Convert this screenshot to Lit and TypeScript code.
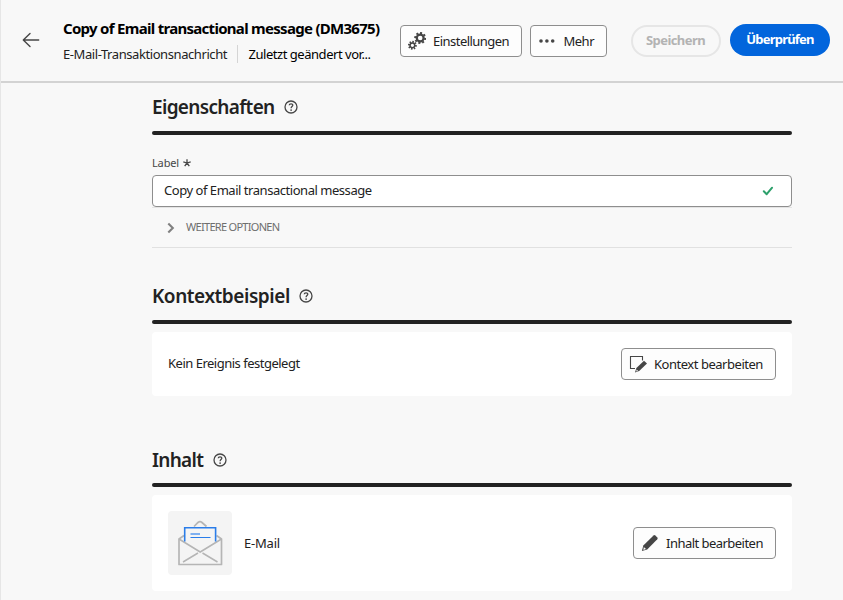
import { LitElement, html, css, svg } from "lit";
import { customElement, property } from "lit/decorators.js";

const gear = (cx: number, cy: number, r: number, hole: number, tooth: number) => svg`
  <circle cx=${cx} cy=${cy} r=${(r + hole) / 2} fill="none" stroke="#464646" stroke-width=${r - hole}></circle>
  ${[0, 45, 90, 135, 180, 225, 270, 315].map(
    (a) => svg`<rect x=${cx - tooth / 2} y=${cy - r - 1.5} width=${tooth} height="2" fill="#464646"
      transform=${`rotate(${a + 10} ${cx} ${cy})`}></rect>`
  )}`;

const icons = {
  back: svg`<path d="M8 2.600 1.300 9l6.700 6.400M1.500 9H16.700" fill="none" stroke="#464646" stroke-width="1.4" stroke-linecap="round" stroke-linejoin="round"></path>`,
  settings: svg`${gear(12.2, 6, 4.5, 2.3, 2.1)}${gear(4.4, 13.3, 3, 1.6, 1.6)}`,
  more: svg`<g fill="#464646"><circle cx="3" cy="9" r="1.8"></circle><circle cx="8.9" cy="9" r="1.8"></circle><circle cx="14.7" cy="9" r="1.8"></circle></g>`,
  context: svg`<path d="M6 13.5H1.5V1.5h12v4" fill="none" stroke="#464646" stroke-width="1.1"></path>
    <path d="M7.4 13.1 15 5.700l3 2.700-7.800 7.500-4.200 1.600z" fill="#464646"></path><path d="m7.600 14.500 1.500 1.500-1.800.6z" fill="#fdfdfd"></path>`,
  pencil: svg`<path d="M2.3 11.6 12.5 1.5q.9-.8 1.8 0l2 2q.8.9 0 1.8L6.2 15.4.9 17z" fill="#464646"></path><path d="m2.8 12.9 2.2 2.2-2.6.8z" fill="#fdfdfd"></path>`,
  chevron: svg`<path d="m6.300 4.600 4.500 4.500-4.500 4.500" fill="none" stroke="#808080" stroke-width="2.1"></path>`,
  check: svg`<path d="m4.800 10.200 2.900 3 5.400-6.500" fill="none" stroke="#2da06b" stroke-width="2" stroke-linecap="round" stroke-linejoin="round"></path>`,
  required: svg`<path d="M9 9V5.200M9 9l3.700-1.200M9 9l2.300 3.200M9 9l-2.300 3.200M9 9 5.300 7.800" fill="none" stroke="#464646" stroke-width="1.300"></path>`,
};

@customElement("ui-icon")
export class UiIcon extends LitElement {
  @property() name: keyof typeof icons = "more";
  static styles = css`
    :host { display: block; width: 18px; height: 18px; flex: none; }
    svg { display: block; }
  `;
  render() {
    return html`<svg width="18" height="18" viewBox="0 0 18 18">${icons[this.name]}</svg>`;
  }
}

@customElement("section-title")
export class SectionTitle extends LitElement {
  static styles = css`
    :host { display: flex; align-items: center; height: 48px; }
    .help { width: 14px; height: 14px; margin-left: 9.5px; }
  `;
  render() {
    return html`<slot></slot><svg class="help" viewBox="0 0 14 14">
      <circle cx="7" cy="7" r="6" fill="none" stroke="#464646" stroke-width="1.3"></circle>
      <path d="M5.2 5.200C5.400 3.300 8.900 3.300 8.800 5.300 8.700 6.500 7.100 6.600 7.100 8.200" fill="none" stroke="#464646" stroke-width="1.3"></path>
      <circle cx="7.1" cy="10.1" r=".85" fill="#464646"></circle></svg>`;
  }
}

@customElement("app-root")
export class AppRoot extends LitElement {
  static styles = css`
    :host {
      display: block; box-sizing: border-box; height: 600px; overflow: hidden;
      background: #f8f8f8; border-left: 1px solid #e6e6e6;
      font: 400 13px/18px "Noto Sans", "Open Sans", sans-serif; color: #222;
      letter-spacing: -0.47px; white-space: nowrap;
    }
    header {
      display: flex; align-items: flex-start; box-sizing: border-box; height: 83px;
      border-bottom: 2px solid #d3d3d3;
    }
    .back { margin: 31px 0 0 21px; }
    .titles { width: 337px; margin-left: 22.5px; padding: 17px 0 0 0.5px; box-sizing: border-box; color: #000; }
    h1 { margin: 0; font-size: 15px; line-height: 22px; font-weight: 700; letter-spacing: -0.71px; }
    .meta { display: flex; align-items: center; height: 18px; margin-top: 6px; }
    .kind { color: #222; letter-spacing: -0.42px; }
    .changed { margin-left: 10px; padding-left: 10.5px; border-left: 1px solid #d5d5d5; }
    .btn {
      display: flex; align-items: center; box-sizing: border-box; height: 32px;
      padding-left: 7px; gap: 7px; border: 1px solid #8e8e8e; border-radius: 4px;
      background: #fdfdfd; color: #222;
    }
    .settings { width: 122px; margin: 25px 0 0 0.5px; letter-spacing: -0.53px; }
    .more { width: 77px; margin: 25px 0 0 8px; letter-spacing: -0.5px; }
    .more ui-icon { margin-right: 0.5px; }
    .pill {
      display: flex; align-items: center; justify-content: center; box-sizing: border-box;
      height: 32px; border-radius: 16px; font-weight: 700;
    }
    .save {
      width: 90px; margin: 25px 0 0 24px; padding: 0 1px 2px 0; border: 2px solid #e6e6e6;
      color: #b3b3b3; letter-spacing: -0.57px;
    }
    .review { width: 100px; margin: 24px 0 0 9px; padding-bottom: 2px; background: #0265dc; color: #fff; letter-spacing: -0.78px; }
    main { width: 640px; margin-left: 151px; }
    section-title { font-size: 19px; line-height: 26px; font-weight: 600; }
    .t1 { letter-spacing: -0.67px; }
    .t2 { letter-spacing: -0.44px; }
    .t3 { height: 46px; letter-spacing: -0.72px; }
    .rule { height: 4px; border-radius: 2px; background: #222; }
    .label { display: flex; align-items: center; height: 16px; margin-top: 20px; font-size: 11px; color: #464646; letter-spacing: -0.15px; }
    .label ui-icon { margin-left: -1px; }
    .field {
      display: flex; align-items: center; justify-content: space-between; box-sizing: border-box;
      height: 32px; margin-top: 4px; padding: 0 14px 2px 11px; border: 1px solid #8e8e8e;
      border-radius: 4px; background: #fff; letter-spacing: -0.46px;
    }
    .options {
      display: flex; align-items: center; box-sizing: border-box; height: 41px; padding-left: 10px;
      border-top: 1px solid #e4e4e4; border-bottom: 1px solid #e1e1e1;
      font-size: 11px; color: #6e6e6e; letter-spacing: -0.7px;
    }
    .options ui-icon { margin-right: 6px; }
    .options span { padding-bottom: 2px; }
    .context { margin-top: 24px; }
    .content { margin-top: 41px; }
    .card {
      display: flex; align-items: center; box-sizing: border-box; height: 64px; margin-top: 8px;
      padding: 0 16px; border-radius: 4px; background: #fff;
    }
    .card.tall { height: 96px; }
    .card .btn { margin-left: auto; }
    .event { padding-bottom: 2px; letter-spacing: -0.5px; }
    .editContext { width: 155px; }
    .editContent { width: 143px; letter-spacing: -0.53px; }
    .thumb { width: 64px; height: 64px; margin-right: 12px; border-radius: 4px; background: #f4f4f4; }
    .mail { letter-spacing: -0.2px; }
  `;
  render() {
    return html`
      <header>
        <ui-icon class="back" name="back"></ui-icon>
        <div class="titles">
          <h1>Copy of Email transactional message (DM3675)</h1>
          <div class="meta"><span class="kind">E-Mail-Transaktionsnachricht</span><span class="changed">Zuletzt geändert vor...</span></div>
        </div>
        <div class="btn settings"><ui-icon name="settings"></ui-icon><span>Einstellungen</span></div>
        <div class="btn more"><ui-icon name="more"></ui-icon><span>Mehr</span></div>
        <div class="pill save">Speichern</div>
        <div class="pill review">Überprüfen</div>
      </header>
      <main>
        <section>
          <section-title class="t1">Eigenschaften</section-title>
          <div class="rule"></div>
          <div class="label">Label<ui-icon name="required"></ui-icon></div>
          <div class="field"><span>Copy of Email transactional message</span><ui-icon name="check"></ui-icon></div>
          <div class="options"><ui-icon name="chevron"></ui-icon><span>WEITERE OPTIONEN</span></div>
        </section>
        <section class="context">
          <section-title class="t2">Kontextbeispiel</section-title>
          <div class="rule"></div>
          <div class="card">
            <span class="event">Kein Ereignis festgelegt</span>
            <div class="btn editContext"><ui-icon name="context"></ui-icon><span>Kontext bearbeiten</span></div>
          </div>
        </section>
        <section class="content">
          <section-title class="t3">Inhalt</section-title>
          <div class="rule"></div>
          <div class="card tall">
            <svg class="thumb" viewBox="0 0 64 64" fill="none">
              <path d="M26 15.5 30 11.500q2-1.6 4 0l4.500 4" stroke="#b5b5b5" stroke-width="1.7"></path>
              <path d="M16 24.500 11 28v25.500h42.500V28L48.500 24.500" stroke="#b5b5b5" stroke-width="1.7" stroke-linejoin="round"></path>
              <path d="M11 28 32.200 41 53.500 28M15 51l15-9M34.500 42l15 9" stroke="#b5b5b5" stroke-width="1.5"></path>
              <path d="M16.700 30.500V16.700H47.600V30.500" stroke="#2a7de9" stroke-width="1.6"></path>
              <path d="M22.500 23h9.500" stroke="#7fb0f0" stroke-width="2"></path>
              <path d="M22.500 26.500h20" stroke="#2a7de9" stroke-width="1.200"></path>
            </svg>
            <span class="mail">E-Mail</span>
            <div class="btn editContent"><ui-icon name="pencil"></ui-icon><span>Inhalt bearbeiten</span></div>
          </div>
        </section>
      </main>
    `;
  }
}
